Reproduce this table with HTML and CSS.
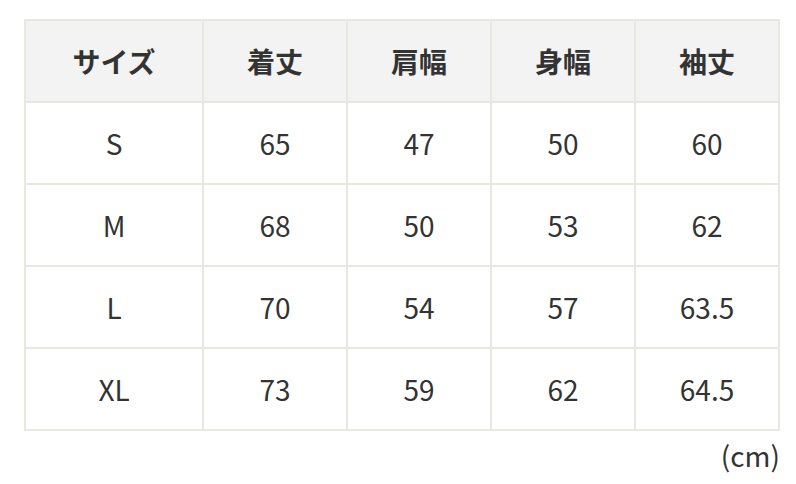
FILE: index.html
```html
<!DOCTYPE html>
<html lang="ja">
<head>
<meta charset="utf-8">
<link rel="stylesheet" href="styles.css">
</head>
<body>
<div class="wrap">
  <table class="size-table">
    <thead>
      <tr><th>サイズ</th><th>着丈</th><th>肩幅</th><th>身幅</th><th>袖丈</th></tr>
    </thead>
    <tbody>
      <tr><td>S</td><td>65</td><td>47</td><td>50</td><td>60</td></tr>
      <tr><td>M</td><td>68</td><td>50</td><td>53</td><td>62</td></tr>
      <tr><td>L</td><td>70</td><td>54</td><td>57</td><td>63.5</td></tr>
      <tr><td>XL</td><td>73</td><td>59</td><td>62</td><td>64.5</td></tr>
    </tbody>
  </table>
  <p class="unit">(cm)</p>
</div>
</body>
</html>
```

FILE: styles.css
```css
html, body {
  margin: 0;
  padding: 0;
  background: #ffffff;
}
body {
  font-family: "Noto Sans CJK JP", "Noto Sans", sans-serif;
  color: #333333;
}
.wrap {
  padding: 19px 16px 0 24px;
}
.size-table {
  width: 756px;
  border-collapse: collapse;
  table-layout: fixed;
  border: 2px solid #e8e8e1;
}
.size-table th,
.size-table td {
  border: 2px solid #e8e8e1;
  height: 80px;
  padding: 0;
  text-align: center;
  vertical-align: middle;
  font-size: 28px;
  line-height: 40px;
}
.size-table th:first-child {
  width: 176px;
}
.size-table th {
  background: #f3f3f3;
  font-weight: 700;
}
.size-table td {
  font-weight: 400;
}
.unit {
  width: 756px;
  margin: 4px 0 0;
  text-align: right;
  font-size: 28px;
  line-height: 40px;
}
```
